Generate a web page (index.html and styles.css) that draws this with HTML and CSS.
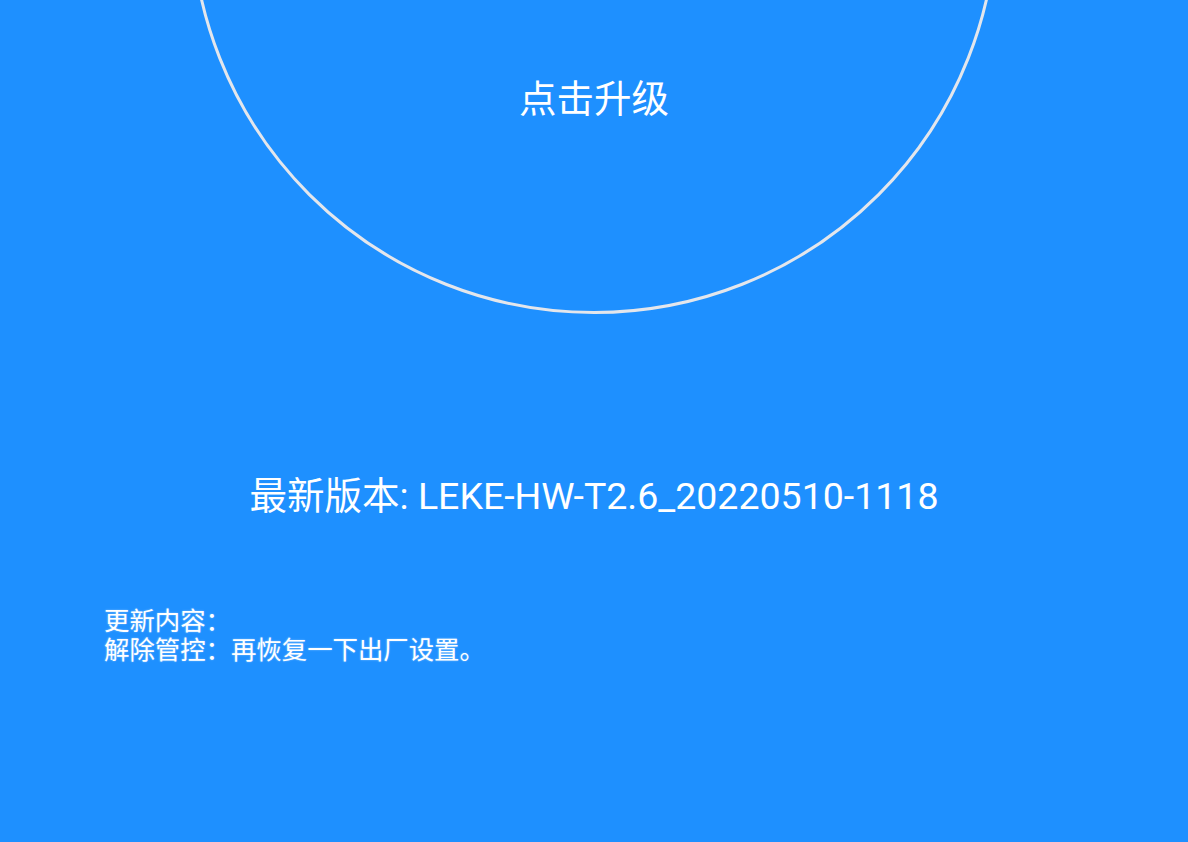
FILE: index.html
```html
<!DOCTYPE html>
<html lang="zh-CN">
<head>
<meta charset="utf-8">
<title>升级</title>
<link rel="stylesheet" href="styles.css">
</head>
<body>
<main class="page">
  <div class="ring">
    <span class="ring-label">点击升级</span>
  </div>
  <h1 class="version">最新版本: LEKE-HW-T2.6_20220510-1118</h1>
  <div class="notes">
    <p class="note-line">更新内容：</p>
    <p class="note-line">解除管控：再恢复一下出厂设置。</p>
  </div>
</main>
</body>
</html>
```
FILE: styles.css
```css
html, body {
  margin: 0;
  padding: 0;
  background: #1e90ff;
}
body {
  width: 1188px;
  height: 842px;
  overflow: hidden;
  font-family: Roboto, "Noto Sans CJK SC", sans-serif;
  color: #ffffff;
}
.page {
  display: flex;
  flex-direction: column;
}
.ring {
  box-sizing: border-box;
  width: 808px;
  height: 808px;
  margin: -494px auto 0;
  border: 3px solid #e3e6ec;
  border-radius: 50%;
  display: flex;
  flex-direction: column;
  justify-content: flex-end;
  align-items: center;
  padding-bottom: 190px;
}
.ring-label {
  font-size: 37.5px;
  line-height: 44px;
}
.version {
  margin: 160px 0 0;
  font-weight: 400;
  font-size: 37.5px;
  line-height: 44px;
  text-align: center;
}
.notes {
  margin-top: 89px;
  padding-left: 104px;
}
.note-line {
  margin: 0;
  font-size: 25.4px;
  line-height: 29px;
  text-shadow: 0 0 2px rgba(255, 255, 255, 0.45);
}
```
